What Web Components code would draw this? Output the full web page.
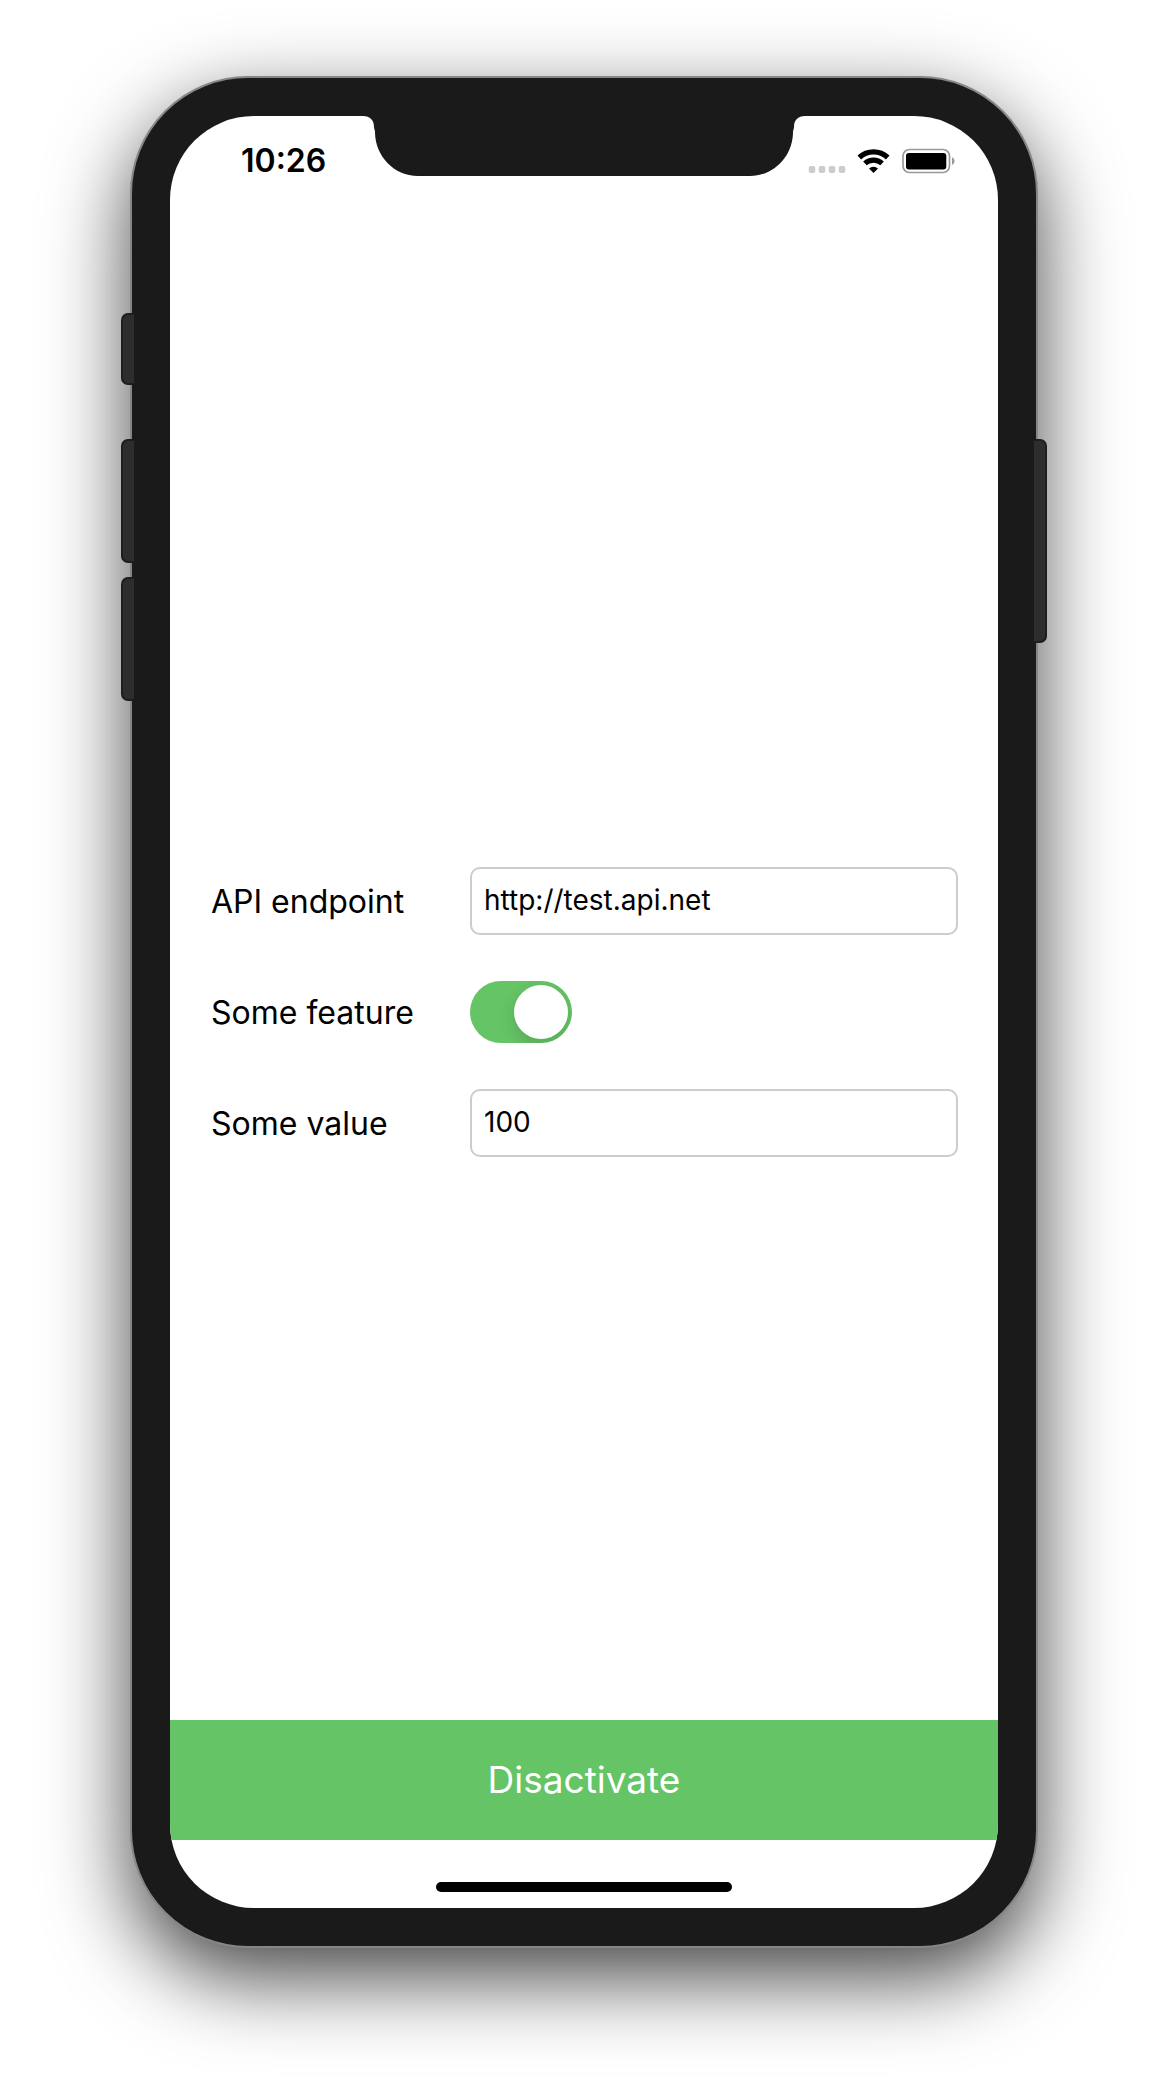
<!DOCTYPE html>
<html lang="en">
<head>
<meta charset="utf-8">
<meta name="viewport" content="width=device-width, initial-scale=1">
<title>Settings</title>
<style>
  body {
    margin: 0;
    min-height: 100vh;
    box-sizing: border-box;
    padding: 76px 130px 148px;
    display: flex;
    flex-direction: column;
    background: #fff;
    color: #000;
    font-family: Inter, "Liberation Sans", sans-serif;
    overflow-x: hidden;
  }
</style>
</head>
<body>
<phone-frame>
  <status-bar slot="status" time="10:26"></status-bar>
  <settings-form>
    <text-row value="http://test.api.net">API endpoint</text-row>
    <switch-row checked>Some feature</switch-row>
    <text-row value="100">Some value</text-row>
  </settings-form>
  <action-button slot="footer">Disactivate</action-button>
</phone-frame>

<script>
  function define(name, html, setup) {
    const template = document.createElement('template');
    template.innerHTML = html;
    customElements.define(name, class extends HTMLElement {
      constructor() {
        super();
        this.attachShadow({ mode: 'open' }).append(template.content.cloneNode(true));
      }
      connectedCallback() {
        if (setup) setup(this, this.shadowRoot);
      }
    });
  }

  const rowStyle = `
    :host {
      display: grid;
      grid-template-columns: 260px 1fr;
      align-items: center;
      min-height: 68px;
    }
    label { padding: 2px 0 0 1px; font-size: 32px; line-height: 40px; }
  `;

  define('phone-frame', `
    <style>
      :host {
        display: flex;
        flex: 1;
        position: relative;
        box-sizing: border-box;
        padding: 38px;
        border: 2px solid #868686;
        border-radius: 118px;
        background: #1a1a1a;
        box-shadow: 0 30px 82px rgba(0, 0, 0, .73);
      }
      .screen {
        flex: 1;
        position: relative;
        display: grid;
        grid-template-rows: 1fr auto 1fr;
        border-radius: 84px;
        overflow: hidden;
        background: #fff;
      }
      .bottom { align-self: end; }
      .home {
        width: 296px;
        height: 10px;
        margin: 42px auto 16px;
        border-radius: 5px;
        background: #000;
      }
      .notch {
        position: absolute;
        top: 0;
        left: 50%;
        margin-left: -224px;
      }
      .keys {
        position: absolute;
        display: flex;
        flex-direction: column;
      }
      .left { left: -11px; top: 235px; }
      .right { right: -11px; top: 361px; }
      .keys i {
        box-sizing: border-box;
        width: 13px;
        height: 124px;
        border: 2px solid #1d1d1d;
        background: #2d2d2d;
      }
      .left i { border-right: 0; border-radius: 7px 0 0 7px; }
      .left .mute { height: 72px; margin-bottom: 54px; }
      .left .up { margin-bottom: 14px; }
      .right i { height: 204px; border-left: 0; border-radius: 0 7px 7px 0; }
    </style>
    <div class="screen">
      <slot name="status"></slot>
      <slot></slot>
      <div class="bottom">
        <slot name="footer"></slot>
        <div class="home"></div>
      </div>
      <svg class="notch" width="448" height="60" viewBox="0 0 448 60" aria-hidden="true">
        <path fill="#1a1a1a" d="M0 0H3C10 0 14 4 14 11C14 13 15 14 15 16C15 40 34 60 58 60H390C414 60 433 40 433 16C433 14 434 13 434 11C434 4 438 0 445 0H448Z"/>
      </svg>
    </div>
    <div class="keys left"><i class="mute"></i><i class="up"></i><i></i></div>
    <div class="keys right"><i></i></div>
  `);

  define('status-bar', `
    <style>
      :host {
        display: flex;
        align-items: center;
        align-self: start;
        gap: 11px;
        height: 90px;
        padding: 0 42px 0 71px;
      }
      time { flex: 1; font-size: 32px; line-height: 40px; font-weight: 600; }
      svg { display: block; }
    </style>
    <time></time>
    <svg width="38" height="26" viewBox="0 0 38 26" fill="#ccc" role="img" aria-label="No signal">
      <rect x=".7" y="18" width="6.6" height="7" rx="2"/>
      <rect x="10.7" y="18" width="6.6" height="7" rx="2"/>
      <rect x="20.7" y="18" width="6.6" height="7" rx="2"/>
      <rect x="30.7" y="18" width="6.6" height="7" rx="2"/>
    </svg>
    <svg width="34" height="26" viewBox="0 0 34 26" role="img" aria-label="Wi-Fi">
      <g fill="none" stroke="#000" stroke-width="5.2">
        <path d="M2.3 9.5A20.5 20.5 0 0 1 30.7 9.5"/>
        <path d="M7.9 15.4A12.8 12.8 0 0 1 25.1 15.4"/>
      </g>
      <path d="M16.5 25L12 20.6A6.6 6.6 0 0 1 21 20.6Z"/>
    </svg>
    <svg width="54" height="26" viewBox="0 0 54 26" role="img" aria-label="Battery full">
      <rect x="1" y="1.5" width="46.5" height="23" rx="6.5" fill="none" stroke="#999" stroke-width="1.7"/>
      <rect x="4" y="5" width="40.3" height="16.4" rx="3"/>
      <path fill="#999" d="M50 9.2C53.4 10.5 53.4 15.5 50 16.8Z"/>
    </svg>
  `, (host, root) => {
    root.querySelector('time').textContent = host.getAttribute('time');
  });

  define('settings-form', `
    <style>
      :host { display: block; padding: 0 40px; }
      form { display: flex; flex-direction: column; gap: 43px; }
    </style>
    <form><slot></slot></form>
  `);

  define('text-row', `
    <style>
      ${rowStyle}
      input {
        box-sizing: border-box;
        width: 100%;
        min-width: 0;
        height: 68px;
        padding: 0 12px 2px;
        border: 2px solid #ccc;
        border-radius: 10px;
        outline: 0;
        background: #fff;
        color: inherit;
        font: 28px/40px Inter, "Liberation Sans", sans-serif;
      }
    </style>
    <label for="field"><slot></slot></label>
    <input id="field" type="text">
  `, (host, root) => {
    root.querySelector('input').value = host.getAttribute('value') || '';
  });

  define('switch-row', `
    <style>
      ${rowStyle}
      input {
        appearance: none;
        box-sizing: border-box;
        display: flex;
        width: 102px;
        height: 62px;
        margin: 0;
        padding: 4px;
        border-radius: 31px;
        overflow: hidden;
        background: #e5e5ea;
      }
      input::before {
        content: "";
        width: 54px;
        height: 54px;
        border-radius: 50%;
        background: #fff;
        box-shadow: 0 6px 16px rgba(0, 0, 0, .15);
      }
      input:checked { background: #65c466; justify-content: flex-end; }
    </style>
    <label for="toggle"><slot></slot></label>
    <input id="toggle" type="checkbox" role="switch">
  `, (host, root) => {
    root.querySelector('input').checked = host.hasAttribute('checked');
  });

  define('action-button', `
    <style>
      :host { display: block; }
      button {
        display: block;
        width: 100%;
        height: 120px;
        padding: 0;
        border: 0;
        background: #65c466;
        color: #fff;
        font: 37px/48px Inter, "Liberation Sans", sans-serif;
      }
    </style>
    <button type="button"><slot></slot></button>
  `);
</script>
</body>
</html>
